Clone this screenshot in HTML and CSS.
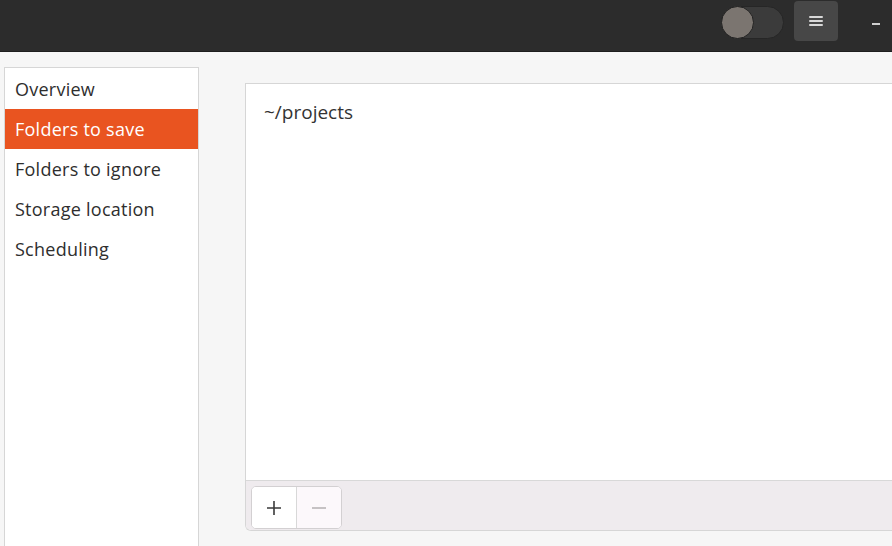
FILE: index.html
```html
<!DOCTYPE html>
<html>
<head>
<meta charset="utf-8">
<link rel="stylesheet" href="styles.css">
</head>
<body>
<div class="app">
  <header class="headerbar">
    <div class="switch"><span class="knob"></span></div>
    <button class="menu-btn" aria-label="Menu">
      <svg width="14" height="12" viewBox="0 0 14 12"><path d="M1 2h12M1 6h12M1 10h12" stroke="#d8d8d8" stroke-width="2" stroke-linecap="round"/></svg>
    </button>
    <div class="min-btn"><span></span></div>
  </header>
  <div class="content">
    <nav class="sidebar">
      <div class="item">Overview</div>
      <div class="item selected">Folders to save</div>
      <div class="item">Folders to ignore</div>
      <div class="item">Storage location</div>
      <div class="item">Scheduling</div>
    </nav>
    <section class="panel">
      <div class="list">
        <div class="row">~/projects</div>
      </div>
      <div class="toolbar">
        <div class="btn-group">
          <button class="tb-btn add">
            <svg width="16" height="16" viewBox="0 0 16 16"><path d="M8 1v14M1 8h14" stroke="#3a3a3a" stroke-width="1.6"/></svg>
          </button>
          <button class="tb-btn remove">
            <svg width="16" height="16" viewBox="0 0 16 16"><path d="M1 8h14" stroke="#b4b0b2" stroke-width="1.6"/></svg>
          </button>
        </div>
      </div>
    </section>
  </div>
</div>
</body>
</html>
```

FILE: styles.css
```css
* { box-sizing: border-box; }
html, body {
  margin: 0;
  padding: 0;
  width: 892px;
  height: 546px;
  overflow: hidden;
  background: #f6f6f6;
  font-family: "Open Sans", "Noto Sans", sans-serif;
  color: #2e2e2e;
}
.app {
  display: flex;
  flex-direction: column;
  height: 546px;
}
.headerbar {
  height: 52px;
  flex: none;
  background: #2c2c2c;
  border-bottom: 1px solid #1e1e1e;
  display: flex;
  align-items: flex-start;
  justify-content: flex-end;
  padding-top: 2px;
}
.switch {
  width: 63px;
  height: 33px;
  margin-top: 4px;
  border-radius: 17px;
  background: #3b3b3b;
  border: 1px solid #262626;
  display: flex;
  align-items: center;
}
.knob {
  width: 33px;
  height: 33px;
  margin-left: -1px;
  border-radius: 50%;
  background: #7b7570;
  border: 1px solid #222;
}
.menu-btn {
  width: 44px;
  height: 40px;
  margin-left: 10px;
  margin-top: -1px;
  border: none;
  border-radius: 4px;
  background: #474747;
  display: flex;
  align-items: center;
  justify-content: center;
  padding: 0;
}
.min-btn {
  width: 54px;
  height: 44px;
  display: flex;
  align-items: center;
  justify-content: flex-end;
  padding-right: 12px;
}
.min-btn span {
  display: block;
  width: 8px;
  height: 2px;
  background: #cfcfcf;
}
.content {
  flex: 1;
  display: flex;
  align-items: flex-start;
  padding: 15px 0 0 4px;
  min-height: 0;
}
.sidebar {
  width: 195px;
  height: 500px;
  flex: none;
  background: #fff;
  border: 1px solid #d6d6d6;
  padding-top: 1px;
}
.item {
  height: 40px;
  line-height: 40px;
  padding-left: 10px;
  font-size: 18px;
  font-weight: 500;
  letter-spacing: 0.25px;
  color: #2e2e2e;
}
.item.selected {
  background: #e95420;
  color: #fff;
}
.panel {
  margin-left: 46px;
  margin-top: 16px;
  flex: 1;
  height: 448px;
  background: #fff;
  border: 1px solid #d6d6d6;
  border-right: none;
  border-radius: 0 0 0 6px;
  display: flex;
  flex-direction: column;
  overflow: hidden;
}
.list {
  flex: 1;
}
.row {
  padding: 15px 0 0 18px;
  font-size: 19px;
  font-weight: 500;
  line-height: 26px;
  color: #333;
}
.toolbar {
  height: 50px;
  flex: none;
  background: #efebee;
  border-top: 1px solid #d8d8d8;
  padding: 5px 0 0 5px;
}
.btn-group {
  display: flex;
  width: 91px;
  height: 43px;
  border: 1px solid #d3d0d2;
  border-radius: 5px;
  overflow: hidden;
  background: #fff;
}
.tb-btn {
  flex: 1;
  border: none;
  padding: 0;
  display: flex;
  align-items: center;
  justify-content: center;
  background: #fff;
}
.tb-btn.add {
  border-right: 1px solid #d8d8d8;
}
.tb-btn.remove {
  background: #fcf8fb;
}
```
